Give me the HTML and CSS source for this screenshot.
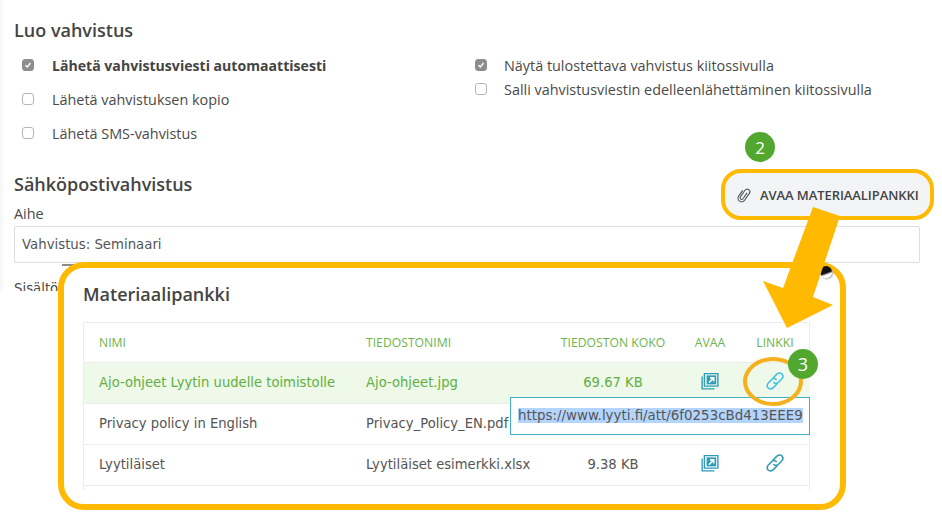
FILE: index.html
```html
<!DOCTYPE html>
<html lang="fi">
<head>
<meta charset="utf-8">
<title>Luo vahvistus</title>
<link rel="stylesheet" href="styles.css">
</head>
<body>
<main class="page">
  <section class="confirm">
    <h2 class="heading">Luo vahvistus</h2>
    <div class="options">
      <div class="col col-left">
        <label class="opt"><span class="box on"><svg viewBox="0 0 12 12"><path d="M3 6.200l2.200 2.200L9 3.600" fill="none" stroke="#fff" stroke-width="1.600"/></svg></span><strong>Lähetä vahvistusviesti automaattisesti</strong></label>
        <label class="opt"><span class="box"></span>Lähetä vahvistuksen kopio</label>
        <label class="opt"><span class="box"></span>Lähetä SMS-vahvistus</label>
      </div>
      <div class="col col-right">
        <label class="opt"><span class="box on"><svg viewBox="0 0 12 12"><path d="M3 6.200l2.200 2.200L9 3.600" fill="none" stroke="#fff" stroke-width="1.600"/></svg></span>Näytä tulostettava vahvistus kiitossivulla</label>
        <label class="opt"><span class="box"></span>Salli vahvistusviestin edelleenlähettäminen kiitossivulla</label>
      </div>
    </div>
  </section>
  <section class="email">
    <h2 class="heading">Sähköpostivahvistus</h2>
    <div class="label">Aihe</div>
    <div class="input">Vahvistus: Seminaari</div>
    <div class="label label-content">Sisältö</div>
  </section>
</main>
<span class="tick"></span>

<div class="bank-btn"><svg class="clip" viewBox="0 0 16 16"><path d="M9.300 4.500V11.600a1.600 1.600 0 0 1-3.200 0V3.600a2.700 2.700 0 0 1 5.400 0V12a3.600 3.600 0 0 1-7.200 0V5" fill="none" stroke="#555" stroke-width="1.100" transform="rotate(35 8 8)"/></svg>AVAA MATERIAALIPANKKI</div>
<span class="badge badge-2">2</span>

<div class="modal">
  <span class="close"></span>
  <h2 class="modal-title">Materiaalipankki</h2>
  <div class="table-wrap">
    <table class="files">
      <colgroup><col class="c1"><col class="c2"><col class="c3"><col class="c4"><col class="c5"></colgroup>
      <thead>
        <tr><th>Nimi</th><th>Tiedostonimi</th><th class="mid">Tiedoston koko</th><th class="mid">Avaa</th><th class="mid">Linkki</th></tr>
      </thead>
      <tbody>
        <tr class="active"><td>Ajo-ohjeet Lyytin uudelle toimistolle</td><td>Ajo-ohjeet.jpg</td><td class="mid">69.67 KB</td>
          <td class="mid"><svg class="ico" viewBox="0 0 16 16"><use href="#open"/></svg></td>
          <td class="mid"><svg class="ico lite" viewBox="3 3 12 12"><use href="#chain"/></svg></td></tr>
        <tr><td>Privacy policy in English</td><td>Privacy_Policy_EN.pdf</td><td class="mid"></td><td></td><td></td></tr>
        <tr><td>Lyytiläiset</td><td>Lyytiläiset esimerkki.xlsx</td><td class="mid">9.38 KB</td>
          <td class="mid"><svg class="ico" viewBox="0 0 16 16"><use href="#open"/></svg></td>
          <td class="mid"><svg class="ico" viewBox="3 3 12 12"><use href="#chain"/></svg></td></tr>
      </tbody>
    </table>
  </div>
  <div class="url"><span class="sel">https://www.lyyti.fi/att/6f0253cBd413EEE9</span></div>
</div>

<span class="ring"></span>
<span class="badge badge-3">3</span>
<svg class="arrow" viewBox="0 0 942 515"><polygon points="813,207 840,216 813,297 833,305 787,328 763,281 783,288" fill="#ffba00"/></svg>

<svg class="defs" width="0" height="0">
  <defs>
    <g id="open">
      <path d="M3 1.500h12v11H3z" fill="none" stroke="currentColor" stroke-width="1.200"/>
      <path d="M1 4v11h11" fill="none" stroke="currentColor" stroke-width="1.200"/>
      <path d="M5 3h8.500v8H5z" fill="currentColor"/>
      <path d="M7 9.500l4-4M8 5.200h3.300v3.300" fill="none" stroke="#fff" stroke-width="1.400"/>
    </g>
    <g id="chain" fill="none" stroke="currentColor" stroke-width="1.050" stroke-linecap="round">
      <path d="M7.600 7.200l2.500-2.600c1.100-1.100 2.600-1.200 3.500-.3s.8 2.400-.3 3.500l-1.800 1.900c-1 1-2.400 1.100-3.300.3"/>
      <path d="M10.400 10.800l-2.500 2.600c-1.100 1.100-2.600 1.200-3.500.3s-.8-2.400.3-3.500l1.800-1.900c1-1 2.400-1.100 3.300-.3"/>
    </g>
  </defs>
</svg>
</body>
</html>
```
FILE: styles.css
```css
* { box-sizing: border-box; }
html, body { margin: 0; height: 515px; overflow: hidden; background: #fff; }
body { position: relative; font-family: "Open Sans", "Noto Sans", sans-serif; color: #454545; }

.page { padding: 19px 22px 0 11px; border-left: 3px solid #f7f7f7; height: 291px; overflow: hidden; }
.heading { margin: 0; font-size: 18px; line-height: 22px; font-weight: 600; color: #444; }

.confirm { height: 154px; }
.options { display: flex; margin-top: 13px; padding-left: 8px; }
.col { display: flex; flex-direction: column; }
.col-left { width: 453px; row-gap: 12px; }
.col-right { row-gap: 2px; }
.opt { display: flex; align-items: center; height: 22px; font-size: 14.4px; color: #4a4a4a; white-space: nowrap; }
.opt strong { font-size: 14.100px; font-weight: 700; color: #444; }
.box { width: 12px; height: 12px; margin-right: 18px; border: 1px solid #b5b5b5; border-radius: 3px; background: #fff; flex: none; display: flex; }
.col-right .box { margin-right: 17px; }
.box.on { background: #8d8d92; border-color: #8d8d92; }
.box svg { width: 100%; height: 100%; }

.label { font-size: 14.4px; line-height: 20px; margin-top: 9px; color: #4a4a4a; }
.input { height: 37px; margin-top: 2px; border: 1px solid #dedede; border-radius: 2px; padding: 0 7px; display: flex; align-items: center; font: 13.300px "DejaVu Sans", sans-serif; color: #555; background: #fff; }
.label-content { margin-top: 16px; font-family: "DejaVu Sans", sans-serif; font-size: 13.300px; }
.tick { position: absolute; left: 62px; top: 264px; width: 12px; height: 2px; background: #8a8a8a; }

.bank-btn { position: absolute; left: 721px; top: 169px; width: 213px; height: 51px; border: 4px solid #ffba00; border-radius: 20px; background: #f3f4f6; display: flex; align-items: center; padding-left: 11px; font-size: 13px; font-weight: 600; color: #444; white-space: nowrap; letter-spacing: -.08px; }
.clip { width: 16px; height: 16px; margin-right: 8px; flex: none; }

.badge { position: absolute; display: flex; align-items: center; justify-content: center; border-radius: 50%; background: #52a82e; color: #fff; font-size: 17px; }
.badge-2 { left: 745px; top: 132px; width: 30px; height: 30px; }
.badge-3 { left: 788px; top: 349px; width: 30px; height: 30px; font-size: 18px; }

.modal { position: absolute; left: 58px; top: 262px; width: 788px; height: 248px; border: 6px solid #ffba00; border-radius: 26px; background: #fff; padding: 14px 19px 0; }
.close { position: absolute; right: 8px; top: -2px; width: 12px; height: 12px; border-radius: 50%; background: linear-gradient(160deg, #111 55%, #fff 70%); box-shadow: 1px 1px 2px #aaa; }
.modal-title { margin: 0; font-size: 18px; line-height: 25px; font-weight: 600; color: #444; }

.table-wrap { margin-top: 15px; width: 727px; height: 168px; border: 1px solid #ececec; border-width: 1px 1px 0; }
.files { width: 726px; border-collapse: collapse; table-layout: fixed; font: 13.170px "DejaVu Sans", sans-serif; color: #555; }
.c1 { width: 267px; } .c2 { width: 195px; } .c3 { width: 134px; } .c4 { width: 60px; } .c5 { width: 70px; }
.files th { height: 39px; padding: 0; text-align: left; font: 400 12.200px "Open Sans", sans-serif; text-transform: uppercase; color: #6db54a; border-bottom: 1px solid #ececec; }
.files td { height: 41px; padding: 0; border-bottom: 1px solid #ececec; white-space: nowrap; }
.files th:first-child, .files td:first-child { padding-left: 15px; }
.files th:nth-child(2), .files td:nth-child(2) { padding-left: 15px; }
.files .mid { text-align: center; }
.active td { background: #eef9ea; color: #62ae40; }
.ico { width: 18px; height: 18px; vertical-align: middle; margin-bottom: 3px; color: #2d9cb8; }
.ico.lite { color: #3cc0e6; }

.url { position: absolute; left: 446px; top: 129px; width: 300px; height: 38px; border: 1px solid #3fb0c6; background: #fff; padding: 8px 0 0 7px; font: 13.400px/20px "DejaVu Sans", sans-serif; color: #555; overflow: hidden; white-space: nowrap; }
.sel { background: #b3d4fc; }

.ring { position: absolute; left: 743px; top: 357px; width: 60px; height: 49px; border: 4px solid #f5b01e; border-radius: 50%; }
.arrow { position: absolute; left: 0; top: 0; width: 942px; height: 515px; pointer-events: none; }
.defs { position: absolute; }
```
